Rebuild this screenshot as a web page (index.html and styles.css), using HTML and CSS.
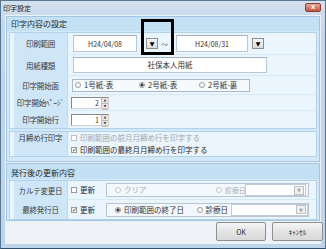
FILE: index.html
```html
<!DOCTYPE html>
<html lang="ja">
	<head>
		<meta charset="utf-8"/>
		<link rel="stylesheet" href="styles.css">
		<title>印字設定</title>
	</head>
	<body>
		<div class="window">
			<header class="titlebar">
				<span class="title">印字設定</span>
				<span class="close">x</span>
			</header>
			<div class="client">
				<section class="group g1">
					<div class="group-head">印字内容の設定</div>
					<div class="panel p1">
						<div class="row r1">
							<div class="label">印刷範囲</div>
							<div class="value">
								<span class="field date1">H24/04/08</span>
								<span class="drop d1">▼</span>
								<span class="tilde">～</span>
								<span class="field date2">H24/08/31</span>
								<span class="drop d2">▼</span>
							</div>
						</div>
						<div class="row r2">
							<div class="label">用紙種類</div>
							<div class="value">
								<span class="field paper">社保本人用紙</span>
							</div>
						</div>
						<div class="row r3">
							<div class="label">印字開始面</div>
							<div class="value">
								<div class="radiobox">
									<span class="opt o1"><i class="radio"></i>1号紙-表</span>
									<span class="opt o2"><i class="radio on"></i>2号紙-表</span>
									<span class="opt o3"><i class="radio"></i>2号紙-裏</span>
								</div>
							</div>
						</div>
						<div class="row r4">
							<div class="label">印字開始ﾍﾟｰｼﾞ</div>
							<div class="value">
								<span class="spin"><span class="num">2</span><span class="arrows"><b>▲</b><b>▼</b></span></span>
							</div>
						</div>
						<div class="row r5">
							<div class="label">印字開始行</div>
							<div class="value">
								<span class="spin"><span class="num">1</span><span class="arrows"><b>▲</b><b>▼</b></span></span>
							</div>
						</div>
					</div>
					<div class="panel p2">
						<div class="row r6">
							<div class="label">月締め行印字</div>
							<div class="value stack">
								<span class="check-line off"><i class="check"></i>印刷範囲の前月月締め行を印字する</span>
								<span class="check-line"><i class="check on">✓</i>印刷範囲の最終月月締め行を印字する</span>
							</div>
						</div>
					</div>
				</section>
				<section class="group g2">
					<div class="group-head">発行後の更新内容</div>
					<div class="panel p3">
						<div class="row r7">
							<div class="label">カルテ変更日</div>
							<div class="value">
								<span class="check-line upd"><i class="check"></i>更新</span>
								<div class="optbox off">
									<span class="opt clear"><i class="radio"></i>クリア</span>
									<span class="opt visit"><i class="radio"></i>診療日</span>
									<span class="combo"><span class="drop">▼</span></span>
								</div>
							</div>
						</div>
						<div class="row r8">
							<div class="label">最終発行日</div>
							<div class="value">
								<span class="check-line upd"><i class="check on">✓</i>更新</span>
								<div class="optbox">
									<span class="opt end"><i class="radio on"></i>印刷範囲の終了日</span>
									<span class="opt visit2"><i class="radio"></i>診療日</span>
									<span class="combo wide off"><span class="drop">▼</span></span>
								</div>
							</div>
						</div>
					</div>
				</section>
				<div class="buttons">
					<button type="button" class="btn ok">OK</button>
					<button type="button" class="btn cancel">ｷｬﾝｾﾙ</button>
				</div>
			</div>
			<div class="mark"></div>
		</div>
	</body>
</html>
```

FILE: styles.css
```css
* {
	margin: 0;
	padding: 0;
	box-sizing: border-box;
}
body {
	width: 326px;
	height: 249px;
	overflow: hidden;
	font-family: "Noto Sans CJK JP", "DejaVu Sans", sans-serif;
	font-size: 7.5px;
	line-height: 10px;
	color: #333333;
	background-color: #ffffff;
}
.window {
	position: relative;
	width: 326px;
	height: 249px;
	display: flex;
	flex-direction: column;
	background: linear-gradient(#d3e0ee, #c3d7ec 30px, #bcd4ec);
	border: 1px solid #5a7691;
	border-bottom-color: #2f4f6b;
}
.titlebar {
	height: 13px;
	display: flex;
	align-items: center;
	justify-content: space-between;
	padding: 0 4px 0 2px;
}
.title {
	font-size: 7px;
	color: #222222;
}
.close {
	width: 16px;
	height: 9px;
	margin-top: -1px;
	border: 1px solid #8a3d33;
	border-radius: 2px;
	background: linear-gradient(#e8a597, #c9523f);
	color: #ffffff;
	font-size: 7px;
	line-height: 6px;
	text-align: center;
	font-family: "DejaVu Sans", sans-serif;
	font-weight: bold;
}
.client {
	flex: 1;
	margin: 1px 4px 4px 4px;
	background-color: #eef2f6;
	display: flex;
	flex-direction: column;
	padding: 1px 1px 0 1px;
}
.group {
	background-color: #d3e8f8;
	border: 1px solid #a3c6e4;
	padding: 0 2px 2px 2px;
}
.g1 {
	height: 146px;
}
.g2 {
	margin-top: 1px;
	height: 58px;
}
.group-head {
	height: 14px;
	line-height: 14px;
	background-color: #c4e0f4;
	margin: 0 -2px 1px -2px;
	padding-left: 4px;
	font-size: 8px;
	color: #2a2a2a;
}
.g2 .group-head {
	height: 15px;
	line-height: 15px;
	padding-top: 1px;
}
.panel {
	background-color: #eaf5fd;
	border: 1px solid #b2d2ec;
	padding: 0 0 0 3px;
}
.p2 {
	margin-top: 2px;
}
.row {
	display: flex;
}
.label {
	width: 55px;
	flex: none;
	background-color: #cfe6f8;
	border-left: 1px solid #e6f3fd;
	border-right: 1px solid #bcdaf0;
	display: flex;
	align-items: center;
	justify-content: center;
	color: #3a3a3a;
	white-space: nowrap;
	letter-spacing: -0.2px;
}
.value {
	flex: 1;
	display: flex;
	align-items: center;
	padding-left: 3px;
	border-bottom: 1px solid #d6e9f7;
}
.r1 { height: 22px; }
.r2 { height: 21px; }
.r3 { height: 19px; }
.r4 { height: 16px; }
.r5 { height: 17px; }
.r5 .value { border-bottom: none; }
.r6 { height: 24px; }
.r6 .label { align-items: flex-start; padding-top: 1px; }
.r6 .value { border-bottom: none; }
.r7 { height: 19px; }
.r8 { height: 19px; }
.r8 .value { border-bottom: none; }

.field {
	height: 17px;
	background-color: #ffffff;
	border: 1px solid #b8c8d8;
	border-top-color: #9fb1c3;
	display: flex;
	align-items: center;
	justify-content: center;
	color: #333333;
	font-size: 7px;
}
.date1 {
	width: 64px;
	margin-left: 2px;
}
.date2 {
	width: 72px;
	margin-left: 8px;
}
.paper {
	width: 194px;
	margin-left: 2px;
	height: 16px;
	font-size: 7.5px;
}
.drop {
	width: 12px;
	height: 11px;
	background: linear-gradient(#f7f7f7, #dcdcdc);
	border: 1px solid #8d8d8d;
	display: flex;
	align-items: center;
	justify-content: center;
	font-size: 6px;
	color: #000000;
	font-family: "DejaVu Sans", sans-serif;
}
.d1 { margin-left: 9px; }
.d2 { margin-left: 4px; }
.tilde {
	margin-left: 3px;
	color: #555555;
	font-size: 7px;
}
.radiobox {
	width: 178px;
	height: 13px;
	margin-left: 1px;
	border: 1px solid #a8bacb;
	background-color: #f6fafd;
	display: flex;
	align-items: center;
}
.opt {
	display: flex;
	align-items: center;
	white-space: nowrap;
}
.o1 { width: 66px; padding-left: 2px; }
.o2 { width: 60px; }
.radio, .check {
	display: inline-block;
	width: 6px;
	height: 6px;
	margin-right: 3px;
	border: 1px solid #9a9a9a;
	background-color: #ffffff;
	font-style: normal;
	flex: none;
}
.radio {
	border-radius: 50%;
}
.radio.on {
	background: radial-gradient(circle, #333333 1.3px, #ffffff 1.8px);
}
.check.on {
	font-size: 6px;
	line-height: 4px;
	text-align: center;
	color: #111111;
	font-weight: bold;
	font-family: "DejaVu Sans", sans-serif;
}
.spin {
	width: 38px;
	height: 12px;
	background-color: #ffffff;
	border: 1px solid #8a8a8a;
	border-right-color: #d0d0d0;
	border-bottom-color: #d0d0d0;
	display: flex;
	justify-content: flex-end;
	align-items: center;
}
.num {
	font-size: 7px;
	margin-right: 2px;
}
.arrows {
	width: 7px;
	height: 10px;
	display: flex;
	flex-direction: column;
	background-color: #e4e4e4;
	border-left: 1px solid #c0c0c0;
}
.arrows b {
	flex: 1;
	font-size: 3px;
	line-height: 5px;
	text-align: center;
	font-weight: normal;
	font-family: "DejaVu Sans", sans-serif;
	border-bottom: 1px solid #bbbbbb;
}
.stack {
	flex-direction: column;
	align-items: flex-start;
	justify-content: center;
	gap: 2px;
}
.check-line {
	display: flex;
	align-items: center;
	white-space: nowrap;
	color: #2a2a2a;
}
.check-line.off {
	color: #a0a8b0;
}
.check-line.off .check {
	border-color: #c0c0c0;
}
.upd {
	width: 35px;
}
.optbox {
	width: 203px;
	height: 14px;
	border: 1px solid #b6c6d6;
	background-color: #f3f8fc;
	display: flex;
	align-items: center;
	padding-left: 8px;
}
.optbox.off .opt {
	color: #a8b0b8;
}
.optbox.off .radio {
	border-color: #c4c4c4;
}
.clear { width: 101px; }
.visit { width: 28px; font-size: 7px; }
.end { width: 82px; }
.combo {
	width: 61px;
	height: 12px;
	margin-left: 1px;
	flex: none;
	background-color: #ffffff;
	border: 1px solid #c0ccd8;
	display: flex;
	justify-content: flex-end;
	align-items: center;
	padding-right: 1px;
}
.combo.wide {
	width: 77px;
	margin-left: 3px;
}
.combo .drop {
	width: 10px;
	height: 9px;
	font-size: 5px;
	color: #9aa4ae;
	border-color: #c0c0c0;
	background: #f0f0f0;
}
.buttons {
	display: flex;
	justify-content: flex-end;
	gap: 6px;
	margin-top: 1px;
	margin-right: -3px;
}
.btn {
	height: 19px;
	border: 1px solid #8e8f8f;
	border-radius: 2px;
	background: linear-gradient(#f5f5f5, #e4e4e4 50%, #d9d9d9);
	font-family: "Noto Sans CJK JP", "DejaVu Sans", sans-serif;
	font-size: 7px;
	color: #333333;
}
.ok { width: 50px; }
.cancel { width: 51px; }
.mark {
	position: absolute;
	left: 140px;
	top: 18px;
	width: 33px;
	height: 36px;
	border: 3px solid #000000;
}
```
